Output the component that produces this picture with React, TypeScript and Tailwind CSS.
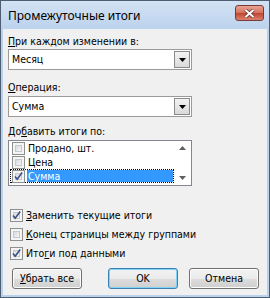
import type { ReactNode } from "react";

const dlgFont = "font-['DejaVu_Sans_Condensed','Liberation_Sans',sans-serif] text-[10.5px] leading-[13px] text-black";

function Ul({ children }: { children: ReactNode }) {
  return <span className="underline underline-offset-[1px]">{children}</span>;
}

function CheckBox({ checked }: { checked?: boolean }) {
  return (
    <span className="relative flex h-[13px] w-[13px] shrink-0 border border-[#8e8f8f] bg-[#f4f4f4] p-[2px]">
      <span className="h-full w-full border border-[#c5c9cf] bg-gradient-to-br from-[#d6d9de] to-[#f7f7f7]" />
      {checked && (
        <svg className="absolute left-0 top-0" width="11" height="11" viewBox="0 0 11 11">
          <path d="M2 5.5 L4.2 8.2 L9.2 1.5" fill="none" stroke="#3b4f86" strokeWidth="1.6" />
        </svg>
      )}
    </span>
  );
}

function Combo({ value }: { value: string }) {
  return (
    <div className="flex h-[21px] w-[184px] items-center border border-[#9a9a9a] bg-white pl-[3px]">
      <span className="flex-1">{value}</span>
      <span className="mr-[1px] flex h-[17px] w-[16px] items-center justify-center border border-[#8a8a8a] bg-gradient-to-b from-[#f3f3f3] to-[#dadada]">
        <svg width="7" height="4" viewBox="0 0 7 4">
          <path d="M0 0H7L3.5 4Z" fill="#000" />
        </svg>
      </span>
    </div>
  );
}

function Btn({ children, primary, className }: { children: ReactNode; primary?: boolean; className?: string }) {
  return (
    <div
      className={`flex h-[21px] w-[70px] items-center justify-center rounded-[3px] border bg-[linear-gradient(#f2f2f2,#ebebeb_50%,#dddddd_50%,#cfcfcf)] ${
        primary ? "border-[#3c7fb1] shadow-[inset_0_0_0_1px_#7fd3f5]" : "border-[#707070] shadow-[inset_0_0_0_1px_#fcfcfc]"
      } ${className ?? ""}`}
    >
      {children}
    </div>
  );
}

const fields = [
  { name: "Продано, шт.", checked: false },
  { name: "Цена", checked: false },
  { name: "Сумма", checked: true, selected: true },
];

export default function App() {
  return (
    <div className="flex h-[298px] w-[270px] flex-col border border-[#4e5d70] bg-[#b9d1ec]">
      {/* title bar */}
      <div className="flex h-[28px] shrink-0 items-start bg-gradient-to-b from-[#d3e2f4] to-[#bcd3ed] pl-[7px]">
        <span className="mt-[7px] flex-1 font-['Noto_Sans',sans-serif] text-[12px] leading-[15px] text-black">
          Промежуточные итоги
        </span>
        <div className="mr-[5px] mt-[4px] flex h-[16px] w-[29px] items-center justify-center rounded-[3px] border border-[#7a3a3a] bg-[linear-gradient(#e8a493,#d4705d_50%,#c0432f_50%,#d8826e)]">
          <svg width="11" height="9" viewBox="0 0 11 9">
            <path d="M1.5 1 L9.5 8 M9.5 1 L1.5 8" stroke="#5a2a2a" strokeWidth="3.4" />
            <path d="M1.5 1 L9.5 8 M9.5 1 L1.5 8" stroke="#fff" strokeWidth="2" />
          </svg>
        </div>
      </div>

      {/* client area */}
      <div className={`mx-[2px] mb-[2px] flex flex-1 flex-col bg-[#f0f0f0] px-[5px] pt-[6px] ${dlgFont}`}>
        <div>
          <Ul>П</Ul>ри каждом изменении в:
        </div>
        <div className="mt-[1px]">
          <Combo value="Месяц" />
        </div>

        <div className="mt-[11px]">
          <Ul>О</Ul>перация:
        </div>
        <div className="mt-[2px]">
          <Combo value="Сумма" />
        </div>

        <div className="mt-[8px]">
          До<Ul>б</Ul>авить итоги по:
        </div>
        <div className="mt-[2px] flex h-[46px] w-[184px] border border-[#828790] bg-white">
          <div className="flex flex-1 flex-col pl-[1px] pt-[0px]">
            {fields.map((f) => (
              <div
                key={f.name}
                className={`flex h-[14px] items-center ${f.selected ? "border border-dotted border-black" : "border border-transparent"}`}
              >
                <span className="ml-[1px]">
                  <CheckBox checked={f.checked} />
                </span>
                <span
                  className={`ml-[2px] flex h-full flex-1 items-center pl-[1px] ${f.selected ? "bg-[#3399ff] text-white" : ""}`}
                >
                  {f.name}
                </span>
              </div>
            ))}
          </div>
          <div className="flex w-[17px] flex-col items-center justify-between py-[5px]">
            <svg width="7" height="4" viewBox="0 0 7 4">
              <path d="M0 4H7L3.5 0Z" fill="#606060" />
            </svg>
            <svg width="7" height="4" viewBox="0 0 7 4">
              <path d="M0 0H7L3.5 4Z" fill="#606060" />
            </svg>
          </div>
        </div>

        <div className="mt-[20px] flex flex-col">
          {[
            { pre: "", ul: "З", post: "аменить текущие итоги", checked: true },
            { pre: "", ul: "К", post: "онец страницы между группами", checked: false },
            { pre: "Ито", ul: "г", post: "и под данными", checked: true },
          ].map((r) => (
            <div key={r.post} className="flex h-[19px] items-center pl-[2px]">
              <CheckBox checked={r.checked} />
              <span className="ml-[3px]">
                {r.pre}
                <Ul>{r.ul}</Ul>
                {r.post}
              </span>
            </div>
          ))}
        </div>

        <div className="mt-[5px] flex pl-[4px]">
          <Btn>
            <span>
              <Ul>У</Ul>брать все
            </span>
          </Btn>
          <Btn primary className="ml-[26px]">
            OK
          </Btn>
          <Btn className="ml-[11px]">Отмена</Btn>
        </div>
      </div>
    </div>
  );
}
